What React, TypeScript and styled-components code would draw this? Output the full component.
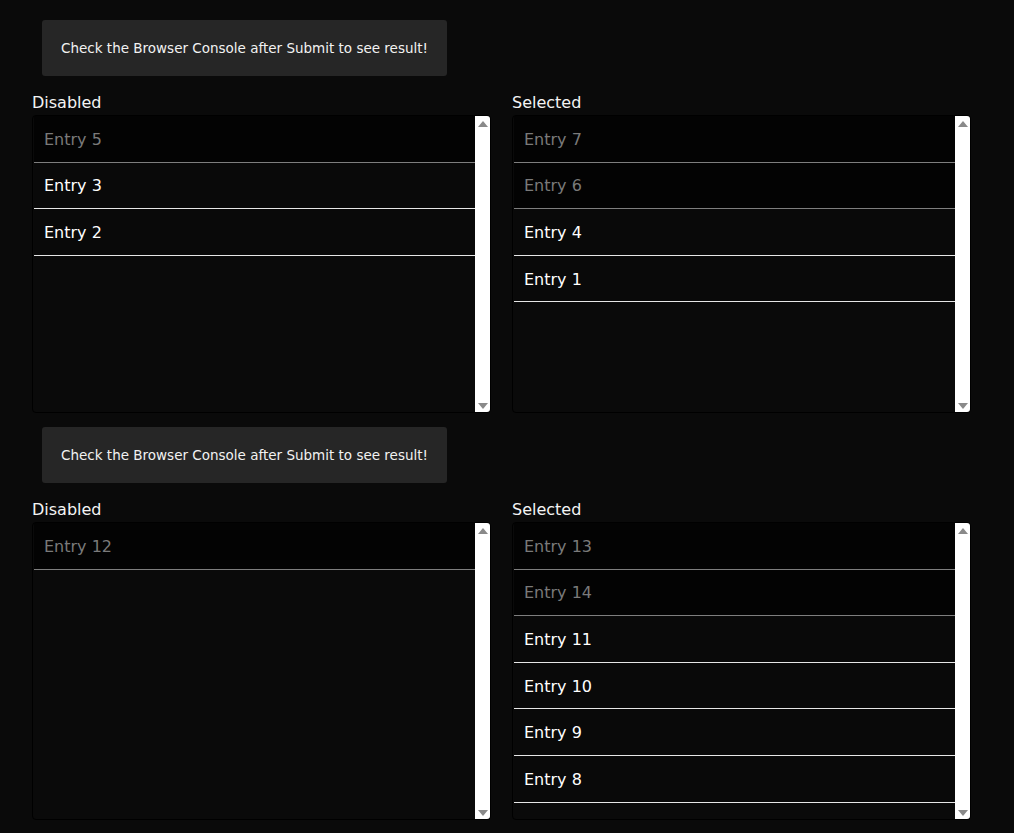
import React from "react";
import styled, { createGlobalStyle } from "styled-components";

const Global = createGlobalStyle`
  html, body { margin: 0; padding: 0; background: #0a0a0a; }
  body { font-family: "DejaVu Sans", Verdana, sans-serif; color: #fff; }
`;

const Page = styled.div`
  padding: 20px 32px 12px 32px;
  width: 939px;
  display: flex;
  flex-direction: column;
`;

const Section = styled.section`
  display: flex;
  flex-direction: column;
  & + & { margin-top: 14px; }
`;

const Info = styled.div`
  margin-left: 10px;
  width: 405px;
  height: 56px;
  box-sizing: border-box;
  background: #262626;
  border-radius: 3px;
  display: flex;
  align-items: center;
  justify-content: center;
  font-size: 13.5px;
  color: #f2f2f2;
  margin-bottom: 18px;
`;

const Columns = styled.div`
  display: grid;
  grid-template-columns: 459px 459px;
  column-gap: 21px;
`;

const Column = styled.div`
  display: flex;
  flex-direction: column;
`;

const Label = styled.div`
  font-size: 16px;
  line-height: 16px;
  height: 21px;
  box-sizing: border-box;
  padding-top: 1px;
  color: #f4f4f4;
`;

const Panel = styled.div`
  height: 298px;
  box-sizing: border-box;
  border: 1px solid #000;
  border-radius: 4px;
  display: flex;
  overflow: hidden;
  background: #0a0a0a;
`;

const List = styled.div`
  flex: 1;
  overflow: hidden;
  padding-left: 1px;
`;

const Item = styled.div<{ $disabled?: boolean }>`
  height: 46.6px;
  box-sizing: border-box;
  border-bottom: 1px solid ${(p) => (p.$disabled ? "#7e7e7e" : "#e6e6e6")};
  background: ${(p) => (p.$disabled ? "#030303" : "#090909")};
  color: ${(p) => (p.$disabled ? "#7a7a7a" : "#ffffff")};
  font-size: 16px;
  display: flex;
  align-items: center;
  padding-left: 10px;
  padding-top: 1px;
`;

const Scrollbar = styled.div`
  width: 15px;
  background: #ffffff;
  display: flex;
  flex-direction: column;
  justify-content: space-between;
  align-items: center;
  padding: 5px 0 3px;
  box-sizing: border-box;
`;

const Arrow = styled.div<{ $down?: boolean }>`
  width: 0;
  height: 0;
  border-left: 5px solid transparent;
  border-right: 5px solid transparent;
  ${(p) =>
    p.$down
      ? "border-top: 6px solid #8a8a8a;"
      : "border-bottom: 6px solid #8a8a8a;"}
`;

type Entry = { name: string; disabled?: boolean };

const Box: React.FC<{ label: string; items: Entry[] }> = ({ label, items }) => (
  <Column>
    <Label>{label}</Label>
    <Panel>
      <List>
        {items.map((it) => (
          <Item key={it.name} $disabled={it.disabled}>
            {it.name}
          </Item>
        ))}
      </List>
      <Scrollbar>
        <Arrow />
        <Arrow $down />
      </Scrollbar>
    </Panel>
  </Column>
);

const sections: { left: Entry[]; right: Entry[] }[] = [
  {
    left: [
      { name: "Entry 5", disabled: true },
      { name: "Entry 3" },
      { name: "Entry 2" },
    ],
    right: [
      { name: "Entry 7", disabled: true },
      { name: "Entry 6", disabled: true },
      { name: "Entry 4" },
      { name: "Entry 1" },
    ],
  },
  {
    left: [{ name: "Entry 12", disabled: true }],
    right: [
      { name: "Entry 13", disabled: true },
      { name: "Entry 14", disabled: true },
      { name: "Entry 11" },
      { name: "Entry 10" },
      { name: "Entry 9" },
      { name: "Entry 8" },
    ],
  },
];

export default function App() {
  return (
    <>
      <Global />
      <Page>
        {sections.map((s, i) => (
          <Section key={i}>
            <Info>Check the Browser Console after Submit to see result!</Info>
            <Columns>
              <Box label="Disabled" items={s.left} />
              <Box label="Selected" items={s.right} />
            </Columns>
          </Section>
        ))}
      </Page>
    </>
  );
}
